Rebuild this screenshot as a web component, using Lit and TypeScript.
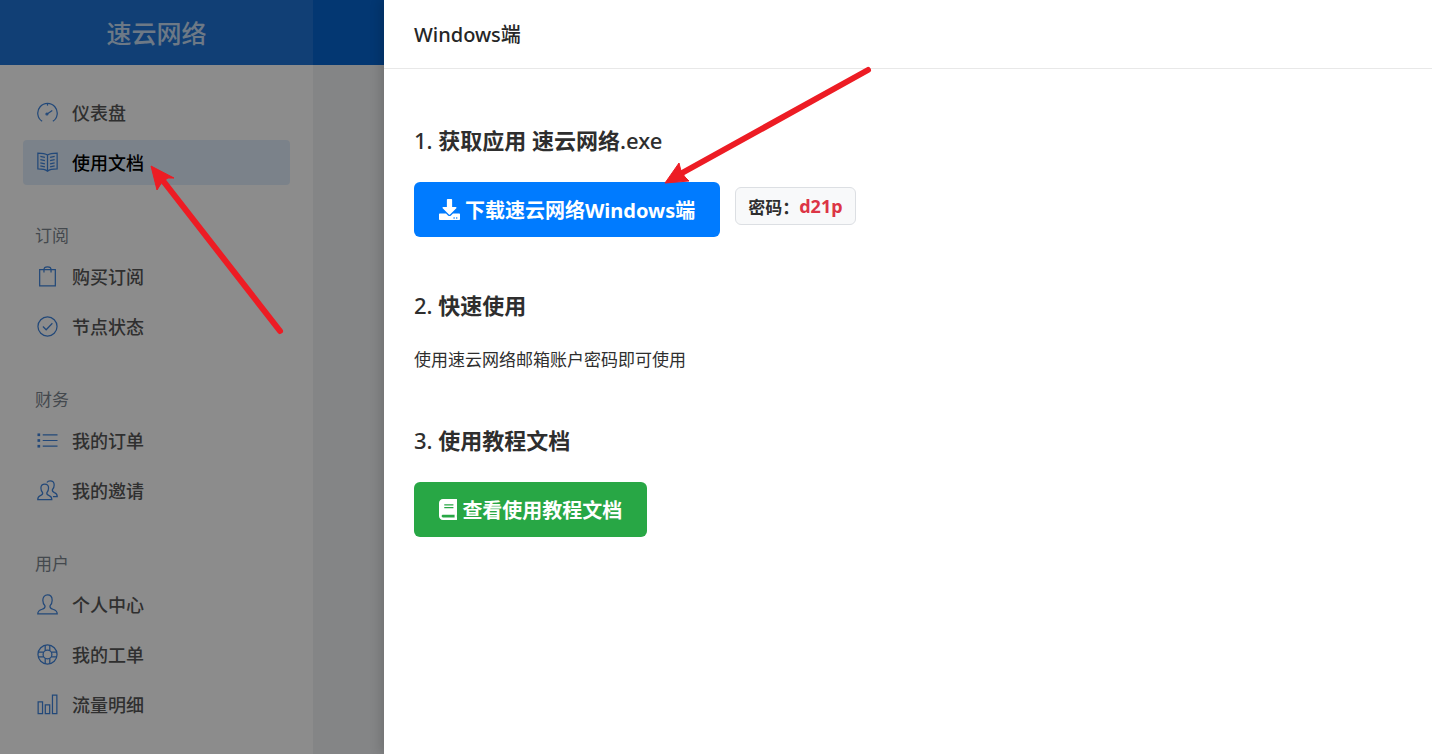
import { LitElement, html, css, svg, nothing } from "lit";
import { customElement, property } from "lit/decorators.js";

const icons: Record<string, unknown> = {
  dashboard: svg`<path d="M5.400 20.200A10.200 10.200 0 1 1 16.600 20.200"/><path d="M11 12.400 16 9"/><circle cx="10.400" cy="12.600" r="1"/><path d="M11 2v1.800"/>`,
  docs: svg`<path d="M11 3.200C8.800 1.600 4.600 1.200 .9 1.200v16.600c3.800 0 8 .6 10.100 2.400 2.100-1.800 6.300-2.400 10.100-2.400V1.200C17.400 1.200 13.200 1.600 11 3.200v17"/><path d="M3.500 4.600l4.800 1M3.500 8l4.800 1M3.500 11.400l4.800 1M3.500 14.600l4.800 1M18.500 4.600l-4.800 1M18.500 8l-4.800 1M18.500 11.400l-4.800 1M18.500 14.600l-4.800 1"/>`,
  bag: svg`<path d="M2.800 3.700h16.400v17H2.800z"/><path d="M7.300 6.700V3.800a3.700 3 0 0 1 7.400 0v2.900"/>`,
  check: svg`<circle cx="11" cy="11" r="10"/><path d="M6.200 11l3.400 3.400 6.500-6.800"/>`,
  list: svg`<path d="M6 5h15.500M6 11h15.500M6 17h15.500"/><g fill="currentColor" stroke="none"><rect x=".5" y="3.600" width="2.800" height="2.800"/><rect x=".5" y="9.600" width="2.800" height="2.800"/><rect x=".5" y="15.600" width="2.800" height="2.800"/></g>`,
  users: svg`<path d="M5.900 13.300C4.600 12 4.100 9.800 4.100 8.300c0-2.600 1.700-4.100 4-4.100s4 1.500 4 4.100c0 1.500-.5 3.700-1.800 5-.4 2 .6 2.500 2.400 3.100 1.900.6 2.800 1.400 2.800 4.100H.8c0-2.700.9-3.500 2.700-4.100 1.800-.6 2.800-1.100 2.400-3.100z"/><path d="M10.400 2.600c.7-1.100 1.900-1.700 3.400-1.700 2.400 0 4.200 1.500 4.200 4.300 0 1.600-.6 3.700-1.900 5-.4 2 .5 2.400 2.200 3.100 2 .7 2.900 1.700 2.900 4.200h-4.500"/>`,
  user: svg`<path d="M8.400 12.500C6.900 11 6.100 8.700 6.100 6.600 6.100 3.200 8.100 1 11 1s4.900 2.200 4.900 5.600c0 2.100-.8 4.400-2.300 5.900-.4 2.200.6 2.800 3 3.500 3.200.9 4.600 1.700 4.600 4.900H.8c0-3.200 1.400-4 4.600-4.900 2.400-.7 3.400-1.300 3-3.500z"/>`,
  support: svg`<circle cx="11" cy="11" r="10"/><circle cx="11" cy="11" r="4.600"/><path d="M8.600 1.400v5.600M13.400 1.400v5.600M8.600 15v5.600M13.400 15v5.600M1.400 8.600h5.600M1.400 13.400h5.600M15 8.600h5.600M15 13.400h5.600"/>`,
  chart: svg`<path d="M1.200 8.200h4.600v12.400H1.200zM8.700 11.400h4.600v9.200H8.700zM16.200 1.200h4.600v19.400h-4.600z"/>`,
};

interface Item {
  icon: string;
  label: string;
  active?: boolean;
}

const groups: { title?: string; items: Item[] }[] = [
  {
    items: [
      { icon: "dashboard", label: "仪表盘" },
      { icon: "docs", label: "使用文档", active: true },
    ],
  },
  {
    title: "订阅",
    items: [
      { icon: "bag", label: "购买订阅" },
      { icon: "check", label: "节点状态" },
    ],
  },
  {
    title: "财务",
    items: [
      { icon: "list", label: "我的订单" },
      { icon: "users", label: "我的邀请" },
    ],
  },
  {
    title: "用户",
    items: [
      { icon: "user", label: "个人中心" },
      { icon: "support", label: "我的工单" },
      { icon: "chart", label: "流量明细" },
    ],
  },
];

@customElement("side-nav")
class SideNav extends LitElement {
  static styles = css`
    :host {
      display: flex;
      flex-direction: column;
      background: #fff;
    }
    .brand {
      display: flex;
      align-items: center;
      justify-content: center;
      height: 65px;
      padding-bottom: 2px;
      box-sizing: border-box;
      background: #1f74d5;
      color: rgba(255, 255, 255, 0.75);
      font-size: 25px;
      font-weight: 500;
      text-decoration: none;
    }
    .nav {
      display: flex;
      flex-direction: column;
      padding: 25px 23px;
    }
    .title {
      margin: 0;
      padding: 38px 12px 5px;
      font-size: 17px;
      line-height: 26px;
      font-weight: 400;
      color: #7d868e;
    }
    .list {
      display: flex;
      flex-direction: column;
      gap: 5px;
      margin: 0;
      padding: 0;
      list-style: none;
    }
    .link {
      display: flex;
      align-items: center;
      gap: 14px;
      height: 45px;
      padding: 0 14px;
      border-radius: 4px;
      color: #575757;
      font-size: 18px;
      font-weight: 500;
      text-decoration: none;
    }
    .label {
      padding-bottom: 2px;
    }
    .active {
      background: #e1edfb;
      color: #000;
    }
    .icon {
      width: 21px;
      height: 21px;
      flex: none;
      fill: none;
      stroke: currentColor;
      stroke-width: 1.3;
      color: #3f84dc;
    }
  `;
  render() {
    return html`
      <a class="brand" href="#">速云网络</a>
      <nav class="nav">
        ${groups.map(
          (g) => html`
            ${g.title ? html`<h2 class="title">${g.title}</h2>` : nothing}
            <ul class="list">
              ${g.items.map(
                (i) => html`<li>
                  <a class="link ${i.active ? "active" : ""}" href="#">
                    <svg class="icon" viewBox="0 0 22 22" aria-hidden="true">${icons[i.icon]}</svg>
                    <span class="label">${i.label}</span>
                  </a>
                </li>`
              )}
            </ul>
          `
        )}
      </nav>
    `;
  }
}

@customElement("doc-drawer")
class DocDrawer extends LitElement {
  @property() heading = "";
  static styles = css`
    :host {
      display: flex;
      flex-direction: column;
      background: #fff;
      color: #2e2e2e;
    }
    .head {
      padding: 21px 30px 19px;
      border-bottom: 1px solid #e8e8e8;
    }
    .caption {
      margin: 0;
      font-size: 20px;
      line-height: 28px;
      font-weight: 500;
      color: #262626;
    }
    .body {
      display: flex;
      flex-direction: column;
      align-items: flex-start;
      gap: 51px;
      padding: 54px 30px;
    }
    .section {
      display: flex;
      flex-direction: column;
      align-items: flex-start;
      gap: 25px;
    }
    .section h2 {
      margin: 0;
      font-size: 22px;
      line-height: 34px;
      font-weight: 500;
    }
    .strong {
      font-weight: 700;
    }
    .row {
      display: flex;
      align-items: flex-start;
      flex-wrap: wrap;
      gap: 15px;
    }
    .button {
      display: flex;
      align-items: center;
      gap: 5px;
      height: 55px;
      padding: 0 25px;
      border-radius: 6px;
      color: #fff;
      font-size: 20px;
      font-weight: 700;
      text-decoration: none;
    }
    .blue {
      background: #007bff;
    }
    .green {
      background: #28a745;
    }
    .glyph {
      height: 21px;
      flex: none;
      fill: currentColor;
    }
    .code {
      display: flex;
      align-items: center;
      margin-top: 5px;
      height: 36px;
      padding: 0 12px;
      border: 1px solid #dcdfe3;
      border-radius: 6px;
      background: #f8f9fa;
      font-size: 17px;
      font-weight: 700;
    }
    .secret {
      color: #dc3545;
      font-size: 18px;
    }
    .text {
      margin: 0;
      font-size: 17px;
      line-height: 25px;
    }
  `;
  render() {
    return html`
      <header class="head"><h1 class="caption">${this.heading}</h1></header>
      <div class="body">
        <section class="section">
          <h2>1. <span class="strong">获取应用 速云网络</span>.exe</h2>
          <div class="row">
            <a class="button blue" href="#">
              <svg class="glyph" viewBox="0 0 512 512" aria-hidden="true">
                <path d="M216 0h80c13.300 0 24 10.700 24 24v168h87.700c17.800 0 26.700 21.500 14.100 34.100L269.700 378.300c-7.500 7.500-19.800 7.500-27.300 0L90.100 226.100c-12.600-12.600-3.700-34.100 14.100-34.100H192V24c0-13.300 10.700-24 24-24zm296 376v112c0 13.300-10.700 24-24 24H24c-13.300 0-24-10.700-24-24V376c0-13.300 10.700-24 24-24h146.700l49 49c20.100 20.100 52.500 20.100 72.600 0l49-49H488c13.300 0 24 10.700 24 24zm-124 88c0-11-9-20-20-20s-20 9-20 20 9 20 20 20 20-9 20-20zm64 0c0-11-9-20-20-20s-20 9-20 20 9 20 20 20 20-9 20-20z"/>
              </svg>
              <span>下载速云网络Windows端</span>
            </a>
            <div class="code">密码：<span class="secret">d21p</span></div>
          </div>
        </section>
        <section class="section">
          <h2>2. <span class="strong">快速使用</span></h2>
          <p class="text">使用速云网络邮箱账户密码即可使用</p>
        </section>
        <section class="section">
          <h2>3. <span class="strong">使用教程文档</span></h2>
          <a class="button green" href="#">
            <svg class="glyph" viewBox="0 0 448 512" aria-hidden="true">
              <path d="M448 360V24c0-13.300-10.700-24-24-24H96C43 0 0 43 0 96v320c0 53 43 96 96 96h328c13.300 0 24-10.700 24-24v-16c0-7.500-3.500-14.300-8.900-18.700-4.200-15.400-4.200-59.300 0-74.700 5.400-4.300 8.900-11.100 8.900-18.600zM128 134c0-3.300 2.700-6 6-6h212c3.300 0 6 2.700 6 6v20c0 3.300-2.700 6-6 6H134c-3.300 0-6-2.700-6-6v-20zm0 64c0-3.300 2.700-6 6-6h212c3.300 0 6 2.700 6 6v20c0 3.300-2.700 6-6 6H134c-3.300 0-6-2.700-6-6v-20zm253.400 250H96c-17.700 0-32-14.300-32-32 0-17.600 14.400-32 32-32h285.400c-1.900 17.100-1.900 46.900 0 64z"/>
            </svg>
            <span>查看使用教程文档</span>
          </a>
        </section>
      </div>
    `;
  }
}

@customElement("app-root")
class AppRoot extends LitElement {
  static styles = css`
    :host {
      display: block;
      position: relative;
      min-height: 100vh;
      overflow: hidden;
      font-family: "Noto Sans", "Noto Sans CJK SC", sans-serif;
    }
    .page {
      display: flex;
      min-height: 100vh;
      background: #f0f2f5;
    }
    .side {
      flex: 0 0 313px;
    }
    .main {
      flex: 1;
    }
    .topbar {
      height: 65px;
      background: #0665d0;
    }
    .mask {
      position: absolute;
      inset: 0;
      background: rgba(0, 0, 0, 0.45);
    }
    .drawer {
      position: absolute;
      inset: 0 0 0 384px;
      box-shadow: -4px 0 10px rgba(0, 0, 0, 0.14);
    }
    .arrows {
      position: absolute;
      top: 0;
      left: 0;
      width: 900px;
      height: 400px;
      pointer-events: none;
      fill: #ed1c24;
      stroke: #ed1c24;
    }
  `;
  render() {
    return html`
      <div class="page">
        <side-nav class="side"></side-nav>
        <main class="main"><div class="topbar"></div></main>
      </div>
      <div class="mask"></div>
      <doc-drawer class="drawer" heading="Windows端"></doc-drawer>
      <svg class="arrows" viewBox="0 0 900 400" aria-hidden="true">
        <path d="M280 331 164 182M868 70 682 173" stroke-width="6" stroke-linecap="round"/>
        <path d="M151 166 157 190 162 182 168 178 174 178zM665 183 679 163 681 171 685 177 689 181z" stroke-width="1"/>
      </svg>
    `;
  }
}
